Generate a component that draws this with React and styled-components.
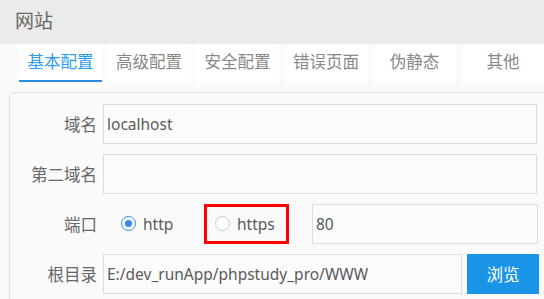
import React, { useState } from 'react'
import styled, { createGlobalStyle } from 'styled-components'

const GlobalStyle = createGlobalStyle`
  html, body {
    margin: 0;
    padding: 0;
    background: #fafafa;
    overflow: hidden;
  }
  body {
    font-family: "Noto Sans", "Noto Sans CJK SC", sans-serif;
  }
`

const Header = styled.div`
  height: 44px;
  line-height: 42px;
  padding-left: 15px;
  background: #ebebeb;
  color: #666;
  font-size: 19px;
`

const Tabs = styled.div`
  display: flex;
  gap: 5.5px;
  height: 38px;
  padding-left: 19px;
`

const Tab = styled.div`
  box-sizing: border-box;
  flex: 0 0 83px;
  height: 38px;
  line-height: 36px;
  text-align: center;
  background: #fff;
  font-size: 16.5px;
  color: ${p => (p.$active ? '#2d9cf0' : '#888')};
  border-bottom: 2px solid ${p => (p.$active ? '#2a8ce0' : 'transparent')};
  cursor: pointer;
`

const Panel = styled.div`
  margin: 10px -40px 0 9px;
  border: 1px solid #ddd;
  border-radius: 5px;
  padding: 11px 0 20px 0;
  display: flex;
  flex-direction: column;
  gap: 10.5px;
`

const Row = styled.div`
  display: grid;
  grid-template-columns: 87px 1fr;
  column-gap: 6px;
  align-items: center;
  height: 39.5px;
`

const Label = styled.div`
  text-align: right;
  color: #666;
  font-size: 16.5px;
`

const Input = styled.input`
  box-sizing: border-box;
  width: ${p => p.$w || 434}px;
  height: 39.5px;
  border: 1px solid #ddd;
  background: #fcfcfc;
  padding: 0 0 0 3px;
  font-family: "Noto Sans", "Noto Sans CJK SC", sans-serif;
  font-size: 15.5px;
  color: #5a5a5a;
  outline: none;
`

const Field = styled.div`
  display: flex;
  align-items: center;
`

const RadioOption = styled.label`
  display: flex;
  align-items: center;
  gap: 7px;
  font-size: 15.5px;
  color: #5a5a5a;
  cursor: pointer;
`

const Dot = styled.span`
  box-sizing: border-box;
  width: 15px;
  height: 15px;
  border-radius: 50%;
  border: 1px solid ${p => (p.$on ? '#2d8cf0' : '#ccc')};
  background: #fff;
  display: flex;
  align-items: center;
  justify-content: center;
  &::after {
    content: '';
    width: 7px;
    height: 7px;
    border-radius: 50%;
    background: ${p => (p.$on ? '#2d8cf0' : 'transparent')};
  }
`

const HttpSlot = styled.div`
  width: 101px;
  padding-left: 18px;
  box-sizing: border-box;
`

const Marked = styled.div`
  box-sizing: border-box;
  width: 85px;
  height: 39.5px;
  border: 3px solid #f00;
  padding-left: 8px;
  display: flex;
  align-items: center;
  margin-right: 23px;
`

const Browse = styled.button`
  margin-left: 5px;
  width: 72px;
  height: 39.5px;
  border: none;
  background: #1a94e6;
  color: #fff;
  font-family: "Noto Sans", "Noto Sans CJK SC", sans-serif;
  font-size: 16.5px;
  cursor: pointer;
`

const tabs = ['基本配置', '高级配置', '安全配置', '错误页面', '伪静态', '其他']

export default function App() {
  const [tab, setTab] = useState(0)
  const [proto, setProto] = useState('http')
  return (
    <>
      <GlobalStyle />
      <Header>网站</Header>
      <Tabs>
        {tabs.map((t, i) => (
          <Tab key={t} $active={i === tab} onClick={() => setTab(i)}>
            {t}
          </Tab>
        ))}
      </Tabs>
      <Panel>
        <Row>
          <Label>域名</Label>
          <Input defaultValue="localhost" />
        </Row>
        <Row>
          <Label>第二域名</Label>
          <Input defaultValue="" />
        </Row>
        <Row>
          <Label>端口</Label>
          <Field>
            <HttpSlot>
              <RadioOption onClick={() => setProto('http')}>
                <Dot $on={proto === 'http'} />
                http
              </RadioOption>
            </HttpSlot>
            <Marked>
              <RadioOption onClick={() => setProto('https')}>
                <Dot $on={proto === 'https'} />
                https
              </RadioOption>
            </Marked>
            <Input $w={226} defaultValue="80" />
          </Field>
        </Row>
        <Row>
          <Label>根目录</Label>
          <Field>
            <Input $w={359} defaultValue="E:/dev_runApp/phpstudy_pro/WWW" />
            <Browse>浏览</Browse>
          </Field>
        </Row>
      </Panel>
    </>
  )
}
